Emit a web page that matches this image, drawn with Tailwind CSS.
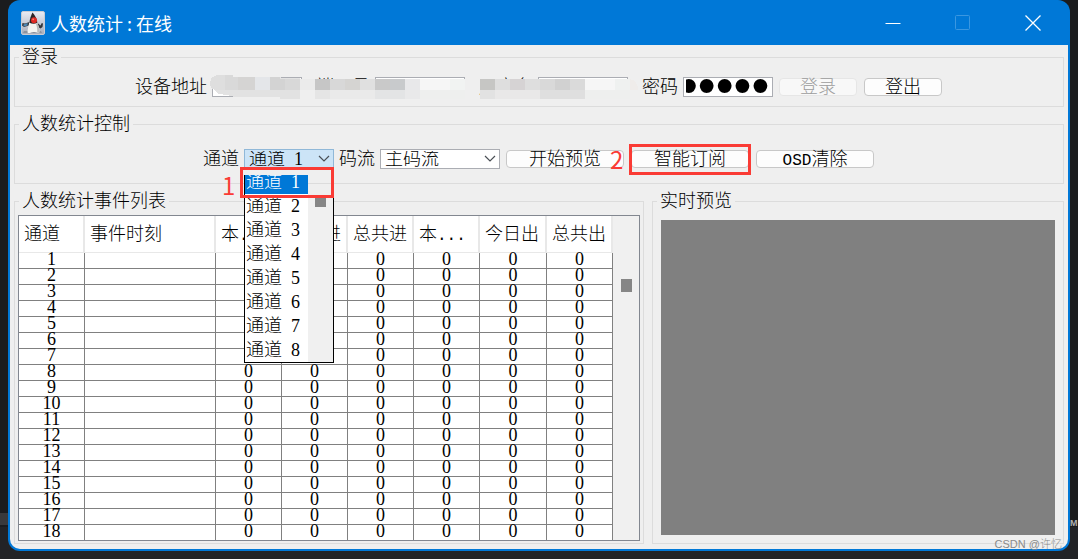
<!DOCTYPE html>
<html lang="zh-CN">
<head>
<meta charset="utf-8">
<title>人数统计 : 在线</title>
<script src="https://cdn.jsdelivr.net/npm/@tailwindcss/browser@4"></script>
</head>
<body class="relative flex min-h-screen flex-col overflow-hidden bg-[#1b1c1e] px-2 pb-2 font-['Liberation_Serif','Noto_Sans_CJK_SC',serif] text-lg/6 font-light text-black">

<!-- Desktop behind the window -->
<div class="absolute inset-x-0 bottom-0 h-8 bg-[#222326]" aria-hidden="true"></div>
<div class="absolute bottom-[34px] left-0 h-3 w-2 bg-[#39393b]" aria-hidden="true"></div>
<div class="absolute right-0 bottom-7 h-4 w-2 font-['Liberation_Sans',sans-serif] text-[9px]/4 font-bold text-[#b0b0b0]" aria-hidden="true">M</div>

<main class="relative flex flex-1 flex-col overflow-hidden rounded-xl bg-[#0078d7] px-0.5 pb-0.5">
  <header class="flex h-[45px] shrink-0 items-center pl-[11px] font-['Noto_Sans_CJK_SC',sans-serif] text-white">
    <svg class="size-6" viewBox="0 0 24 24" aria-hidden="true">
      <defs>
        <linearGradient id="tile" x1="0" y1="0" x2="0" y2="1"><stop offset="0" stop-color="#e9ecf5"/><stop offset="1" stop-color="#a6abb8"/></linearGradient>
      </defs>
      <rect x="0.5" y="0.5" width="23" height="23" rx="1.5" fill="url(#tile)" stroke="#c9cbd2"/>
      <path d="M3 20h17l1 2H2z" fill="#8e939e"/>
      <path d="M8.500 11L4 12.500 1.500 12 1 14.500 3 16 8 14.500zM16.500 12l3 2.500 1.300-2.500 1.200.5-.5 3.500-2 1.500-3-2z" fill="#34363b"/>
      <path d="M2.500 13.500l4-1.500v2.500l-4 1z" fill="#4c86b4"/>
      <path d="M8.500 11c-1 4-2 7-2 10.500 2 1.500 3.500-.5 6-.5s4 1.500 6 .2C18.500 18 17.500 14 16 11z" fill="#f4f4f1"/>
      <path d="M16.500 12c1 3 2 6 2 9.200-.8.600-1.500.500-2.300.300.300-3-.2-6-1.200-8.500z" fill="#b8bab9"/>
      <path d="M11.500 1.500C10 4 8.800 8 8.400 11.800c2.600 1.200 5.600 1.200 8 0C16 8 14 4 11.500 1.500z" fill="#2b2427"/>
      <circle cx="13" cy="9.200" r="3" fill="#e02a24"/>
      <circle cx="12.200" cy="8.300" r="0.900" fill="#ff7d73"/>
    </svg>
    <h1 class="ml-1.5 flex-1 font-normal">人数统计 : 在线</h1>
    <button type="button" aria-label="最小化" class="grid h-full w-[70px] place-items-center">
      <svg class="size-4" viewBox="0 0 16 16" stroke="#fff" fill="none"><path d="M0.500 8.500h15"/></svg>
    </button>
    <button type="button" aria-label="最大化" disabled class="grid h-full w-[70px] place-items-center">
      <svg class="size-4" viewBox="0 0 16 16" stroke="#3a97e1" fill="none"><rect x="0.500" y="0.500" width="14" height="14" rx="1"/></svg>
    </button>
    <button type="button" aria-label="关闭" class="grid h-full w-[70px] place-items-center">
      <svg class="size-4" viewBox="0 0 16 16" stroke="#fff" stroke-width="1.300" fill="none"><path d="M0.500 0.500l15 15M15.500 0.500l-15 15"/></svg>
    </button>
  </header>

  <div class="flex flex-1 flex-col gap-[5px] rounded-b-[10px] bg-[#efefef] px-1 pb-[5px]">
    <fieldset class="min-w-0 border border-[#dcdcdc] pt-2 pb-[9px]">
      <legend class="ml-1 px-[3px]">登录</legend>
      <div class="flex justify-center">
        <div class="relative flex h-5 items-center gap-[5px]">
          <label for="host" class="whitespace-nowrap">设备地址</label>
          <input id="host" type="text" class="h-5 w-[90px] border border-[#abadb3] bg-white px-0.5">
          <label for="port" class="whitespace-nowrap">&ensp;端口号</label>
          <input id="port" type="text" class="h-5 w-[90px] border border-[#abadb3] bg-white px-0.5">
          <label for="user" class="whitespace-nowrap">&ensp;用户名</label>
          <input id="user" type="text" class="h-5 w-[90px] border border-[#abadb3] bg-white px-0.5">
          <label for="pass" class="whitespace-nowrap">&ensp;密码</label>
          <input id="pass" type="password" value="admin" class="h-5 w-[90px] border border-[#abadb3] bg-white px-0.5 pb-[3px] -indent-1.5 font-['Liberation_Sans',sans-serif] text-[51px]">
          <button type="button" disabled class="mx-px h-[18px] w-[78px] rounded-sm border border-[#e6e6e6] bg-[#f8f8f8] leading-4 text-[#9c9c9c]">登录</button>
          <button type="button" class="mx-px h-[18px] w-[78px] rounded-sm border border-[#c8c8c8] bg-[#fdfdfd] leading-4">登出</button>
          <!-- Mosaic that hides the credentials -->
          <svg class="absolute -top-0.5 left-[75px] h-6 w-[428px]" viewBox="0 0 428 24" shape-rendering="crispEdges" aria-hidden="true">
            <path d="M2 8Q4 0 14 0h9v2h48v1h19v21H70v-2H25l-8-2-8-1-5-4z" fill="#e2e2e2"/>
            <path d="M0 9q0-9 9-9h6v15H6q-6-1-6-6z" fill="#dedede"/>
            <path d="M15 0h8v2h5v13H15z" fill="#d9d9d9"/>
            <path d="M28 2h17v13H28z" fill="#d5d4d3"/><path d="M45 2h15v13H45z" fill="#e4e6e9"/>
            <path d="M60 2h10v2h5v11H60z" fill="#d3d3d3"/><path d="M75 4h15v11H75z" fill="#d8d8d8"/>
            <path d="M90 4h15v11H90z" fill="#ebebeb"/><path d="M105 4h15v11h-15z" fill="#c6c6c6"/>
            <path d="M120 4h15v11h-15z" fill="#d8d8d8"/><path d="M135 4h15v11h-15z" fill="#d5d4d2"/>
            <path d="M150 4h15v11h-15z" fill="#e0e0e0"/><path d="M165 4h15v11h-15z" fill="#c9c9c9"/>
            <path d="M180 4h15v11h-15z" fill="#c8cacc"/><path d="M195 4h15v11h-15z" fill="#e8e8ea"/>
            <path d="M210 4h30v11h-30z" fill="#f6f6f6"/><path d="M240 4h15v11h-15z" fill="#f1f3f2"/>
            <path d="M270 4h15v11h-15z" fill="#c6c6c4"/><path d="M285 4h15v11h-15z" fill="#dedede"/>
            <path d="M300 4h15v11h-15z" fill="#d6d3d4"/><path d="M315 4h15v11h-15z" fill="#dedede"/>
            <path d="M330 4h15v11h-15z" fill="#d9d9d9"/><path d="M345 4h15v11h-15z" fill="#d1d1d1"/>
            <path d="M360 4h15v11h-15z" fill="#dadada"/><path d="M375 4h30v11h-30z" fill="#f6f6f6"/>
            <path d="M405 4h15v11h-15z" fill="#eff1f0"/><path d="M420 4q8 2 8 11h-8z" fill="#efecea"/>
            <path d="M90 15h15v9H90z" fill="#efefef"/><path d="M105 15h15v9h-15z" fill="#e5e5e5"/>
            <path d="M120 15h45v9h-45z" fill="#eaeaea"/><path d="M165 15h30v9h-30z" fill="#e3e4e5"/>
            <path d="M195 15h15v9h-15z" fill="#e9e9ea"/><path d="M210 15h45v9h-45z" fill="#eeefee"/>
            <path d="M270 15h15v9h-15z" fill="#e2e2e2"/><path d="M285 15h45v9h-45z" fill="#e9e8e8"/>
            <path d="M330 15h45v9h-45z" fill="#dfdfdf"/><path d="M375 15h45v9h-45z" fill="#eeefee"/>
          </svg>
        </div>
      </div>
    </fieldset>

    <fieldset class="min-w-0 border border-[#dcdcdc] pt-[13px] pb-3.5">
      <legend class="ml-1 px-[3px]">人数统计控制</legend>
      <div class="flex h-5 items-center justify-center gap-[5px]">
        <label for="channel" class="whitespace-nowrap">通道</label>
        <div class="relative z-10 h-5 w-[90px]">
          <select id="channel" class="block h-5 w-full appearance-none border border-[#90b8d8] bg-[#cce4f7] pl-1 leading-4">
            <option>通道&ensp;1</option>
          </select>
          <svg class="pointer-events-none absolute top-1.5 right-1 h-2 w-3" viewBox="0 0 12 8" fill="none" stroke="#4a4f55" stroke-width="1.200" aria-hidden="true"><path d="M1 1l5 5 5-5"/></svg>
          <!-- Open channel list -->
          <div class="absolute top-[26px] left-0 flex w-full">
            <ul class="flex-1 border-b border-l border-black bg-white">
              <li class="h-[19px] overflow-hidden bg-[#0078d7] pl-px leading-[14px] text-white">通道&ensp;1</li>
              <li class="h-6 pl-px">通道&ensp;2</li>
              <li class="h-6 pl-px">通道&ensp;3</li>
              <li class="h-6 pl-px">通道&ensp;4</li>
              <li class="h-6 pl-px">通道&ensp;5</li>
              <li class="h-6 pl-px">通道&ensp;6</li>
              <li class="h-6 pl-px">通道&ensp;7</li>
              <li class="h-6 pl-px">通道&ensp;8</li>
            </ul>
            <div class="mt-5 w-[26px] border-r border-b border-black bg-[#f0f0f0] pl-[7px]"><div class="h-3 w-[11px] bg-[#868686]"></div></div>
          </div>
          <div class="absolute top-[18px] -left-1 h-[31px] w-[94px] border-3 border-[#fa3b35]"></div>
          <span class="absolute top-6 -left-[22px] font-['Noto_Sans_CJK_SC',sans-serif] text-2xl/6 font-normal text-[#fa3b35]">1</span>
        </div>
        <label for="stream" class="whitespace-nowrap">码流</label>
        <div class="relative h-5 w-[120px]">
          <select id="stream" class="block h-5 w-full appearance-none border border-[#abadb3] bg-white pl-1 leading-4">
            <option>主码流</option>
          </select>
          <svg class="pointer-events-none absolute top-1.5 right-1 h-2 w-3" viewBox="0 0 12 8" fill="none" stroke="#4a4f55" stroke-width="1.200" aria-hidden="true"><path d="M1 1l5 5 5-5"/></svg>
        </div>
        <button type="button" class="mx-px h-[18px] w-[118px] rounded-sm border border-[#c8c8c8] bg-[#fdfdfd] leading-4">开始预览</button>
        <div class="relative mx-px flex">
          <button type="button" class="h-[18px] w-[118px] rounded-sm border border-[#c8c8c8] bg-[#fdfdfd] leading-4">智能订阅</button>
          <div class="pointer-events-none absolute -inset-x-0.5 -top-1.5 h-[31px] border-3 border-[#fa3b35]"></div>
          <span class="absolute -top-[3px] -left-[21px] font-['Noto_Sans_CJK_SC',sans-serif] text-2xl/6 font-normal text-[#fa3b35]">2</span>
        </div>
        <button type="button" class="mx-px h-[18px] w-[118px] rounded-sm border border-[#c8c8c8] bg-[#fdfdfd] leading-4"><span class="font-['Liberation_Mono',monospace] text-base/4">OSD</span>清除</button>
      </div>
    </fieldset>

    <div class="grid flex-1 grid-cols-[630fr_412fr] gap-2">
      <fieldset class="flex min-w-0 flex-col border border-[#dcdcdc] px-[3px] pt-0.5 pb-0.5">
        <legend class="ml-px px-[3px]">人数统计事件列表</legend>
        <div class="flex flex-1 border border-[#828790] bg-[#f0f0f0]">
          <table class="flex-1 table-fixed border-separate border-spacing-0 bg-white">
            <colgroup>
              <col class="w-[66px]"><col class="w-[131px]"><col class="w-[66px]"><col class="w-[66px]"><col class="w-[66px]"><col class="w-[66px]"><col class="w-[67px]"><col class="w-[66px]">
            </colgroup>
            <thead>
              <tr class="h-[37px] text-left *:overflow-hidden *:border-r-2 *:border-b *:border-[#e8e8e8] *:p-0 *:pl-[5px] *:font-light *:whitespace-nowrap">
                <th>通道</th><th>事件时刻</th>
                <th>本<span class="font-['Liberation_Mono',monospace] text-base/4">...</span></th>
                <th>今日进</th><th>总共进</th>
                <th>本<span class="font-['Liberation_Mono',monospace] text-base/4">...</span></th>
                <th>今日出</th><th>总共出</th>
              </tr>
            </thead>
            <tbody id="rows"></tbody>
          </table>
          <div class="w-[26px] pt-[63px] pl-2"><div class="h-[13px] w-[11px] bg-[#868686]"></div></div>
        </div>
      </fieldset>
      <fieldset class="flex min-w-0 flex-col border border-[#dcdcdc] px-2 pt-[7px] pb-2">
        <legend class="-ml-1 px-[3px]">实时预览</legend>
        <div class="flex-1 bg-[#808080]"></div>
      </fieldset>
    </div>
  </div>
</main>

<div class="absolute right-4 bottom-[7px] font-['Liberation_Sans','Noto_Sans_CJK_SC',sans-serif] text-[11px]/4 text-[#8a8a8a]">CSDN @许忆</div>

<template id="row">
  <tr class="h-4 text-center *:h-4 *:border-r *:border-b *:border-[#808080] *:p-0 *:align-top *:leading-[13px] last:h-[15px] last:*:h-[15px] last:*:border-b-0">
    <td></td><td></td><td>0</td><td>0</td><td>0</td><td>0</td><td>0</td><td>0</td>
  </tr>
</template>
<script>
  const body = document.getElementById('rows');
  const row = document.getElementById('row');
  for (let n = 1; n <= 18; n++) {
    const tr = row.content.firstElementChild.cloneNode(true);
    tr.cells[0].textContent = n;
    body.append(tr);
  }
</script>
</body>
</html>
